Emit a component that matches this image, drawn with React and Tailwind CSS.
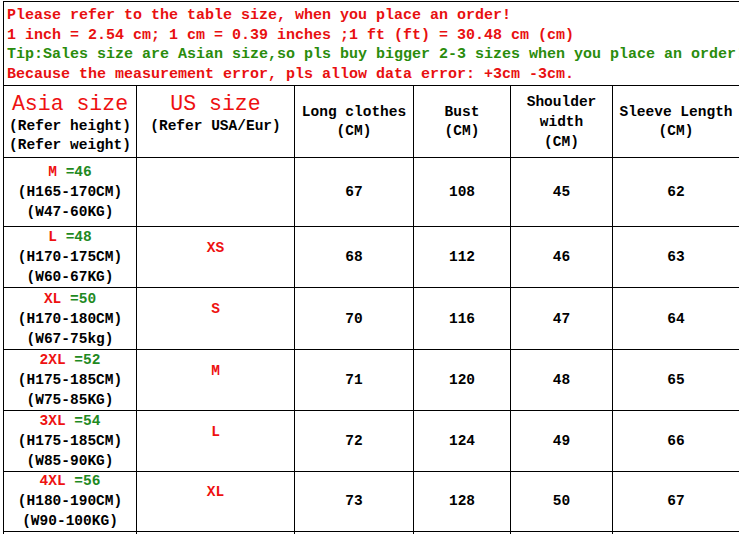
import React from "react"

const rows = [
    { size: "M", eu: "=46", h: "(H165-170CM)", w: "(W47-60KG)", us: "", long: "67", bust: "108", sh: "45", sl: "62", height: "h-[69px]" },
    { size: "L", eu: "=48", h: "(H170-175CM)", w: "(W60-67KG)", us: "XS", long: "68", bust: "112", sh: "46", sl: "63", height: "h-[61px]" },
    { size: "XL", eu: "=50", h: "(H170-180CM)", w: "(W67-75kg)", us: "S", long: "70", bust: "116", sh: "47", sl: "64", height: "h-[62px]" },
    { size: "2XL", eu: "=52", h: "(H175-185CM)", w: "(W75-85KG)", us: "M", long: "71", bust: "120", sh: "48", sl: "65", height: "h-[61px]" },
    { size: "3XL", eu: "=54", h: "(H175-185CM)", w: "(W85-90KG)", us: "L", long: "72", bust: "124", sh: "49", sl: "66", height: "h-[60px]" },
    { size: "4XL", eu: "=56", h: "(H180-190CM)", w: "(W90-100KG)", us: "XL", long: "73", bust: "128", sh: "50", sl: "67", height: "h-[61px]" },
]

const cols = "grid grid-cols-[133px_158px_119px_97px_102px_127px]"
const cell = "border-r border-b border-black"

export default function App() {
    return (
        <div className="w-[739px] h-[534px] overflow-hidden bg-white text-black font-['Liberation_Mono',monospace]">
            <div className="w-[740px] pt-[1px] pl-[3px]">
                {/* notes above the table */}
                <div className="h-[85px] border-l border-t border-b border-black pl-[3px] pt-[4px] text-[15px] leading-[19.7px] font-bold whitespace-nowrap overflow-hidden">
                    <div className="text-[#e81010]">Please refer to the table size, when you place an order!</div>
                    <div className="text-[#e81010]">1 inch = 2.54 cm; 1 cm = 0.39 inches ;1 ft (ft) = 30.48 cm (cm)</div>
                    <div className="text-[#2a8c0c]">Tip:Sales size are Asian size,so pls buy bigger 2-3 sizes when you place an order!</div>
                    <div className="text-[#e81010]">Because the measurement error, pls allow data error: +3cm -3cm.</div>
                </div>

                <div className="border-l border-black text-[14.5px] font-bold">
                    {/* header */}
                    <div className={`${cols} h-[72px]`}>
                        <div className={`${cell} flex flex-col items-center pt-[5px]`}>
                            <span className="text-[21.5px] leading-[26px] font-normal text-[#ee1111]">Asia size</span>
                            <span className="leading-[19px]">(Refer height)</span>
                            <span className="leading-[19px]">(Refer weight)</span>
                        </div>
                        <div className={`${cell} flex flex-col items-center pt-[5px]`}>
                            <span className="text-[21.5px] leading-[26px] font-normal text-[#ee1111]">US size</span>
                            <span className="leading-[19px]">(Refer USA/Eur)</span>
                        </div>
                        <div className={`${cell} flex flex-col items-center justify-center leading-[19px]`}>
                            <span>Long clothes</span>
                            <span>(CM)</span>
                        </div>
                        <div className={`${cell} flex flex-col items-center justify-center leading-[19px]`}>
                            <span>Bust</span>
                            <span>(CM)</span>
                        </div>
                        <div className={`${cell} flex flex-col items-center justify-center leading-[20px]`}>
                            <span>Shoulder</span>
                            <span>width</span>
                            <span>(CM)</span>
                        </div>
                        <div className={`${cell} flex flex-col items-center justify-center leading-[19px] whitespace-nowrap`}>
                            <span>Sleeve Length</span>
                            <span>(CM)</span>
                        </div>
                    </div>

                    {rows.map((r) => (
                        <div key={r.size} className={`${cols} ${r.height}`}>
                            <div className={`${cell} flex flex-col items-center justify-center leading-[20px]`}>
                                <span>
                                    <span className="text-[#ee1111]">{r.size}</span>
                                    <span className="text-[#1f8a1f]"> {r.eu}</span>
                                </span>
                                <span>{r.h}</span>
                                <span>{r.w}</span>
                            </div>
                            <div className={`${cell} text-center pt-[11px] leading-[20px] text-[#ee1111]`}>{r.us}</div>
                            <div className={`${cell} flex items-center justify-center pt-[2px]`}>{r.long}</div>
                            <div className={`${cell} flex items-center justify-center pt-[2px]`}>{r.bust}</div>
                            <div className={`${cell} flex items-center justify-center pt-[2px]`}>{r.sh}</div>
                            <div className={`${cell} flex items-center justify-center pt-[2px]`}>{r.sl}</div>
                        </div>
                    ))}

                    {/* start of the next row, cut off by the frame */}
                    <div className={`${cols} h-[20px]`}>
                        <div className="border-r border-black" />
                        <div className="border-r border-black" />
                        <div className="border-r border-black" />
                        <div className="border-r border-black" />
                        <div className="border-r border-black" />
                        <div className="border-r border-black" />
                    </div>
                </div>
            </div>
        </div>
    )
}
